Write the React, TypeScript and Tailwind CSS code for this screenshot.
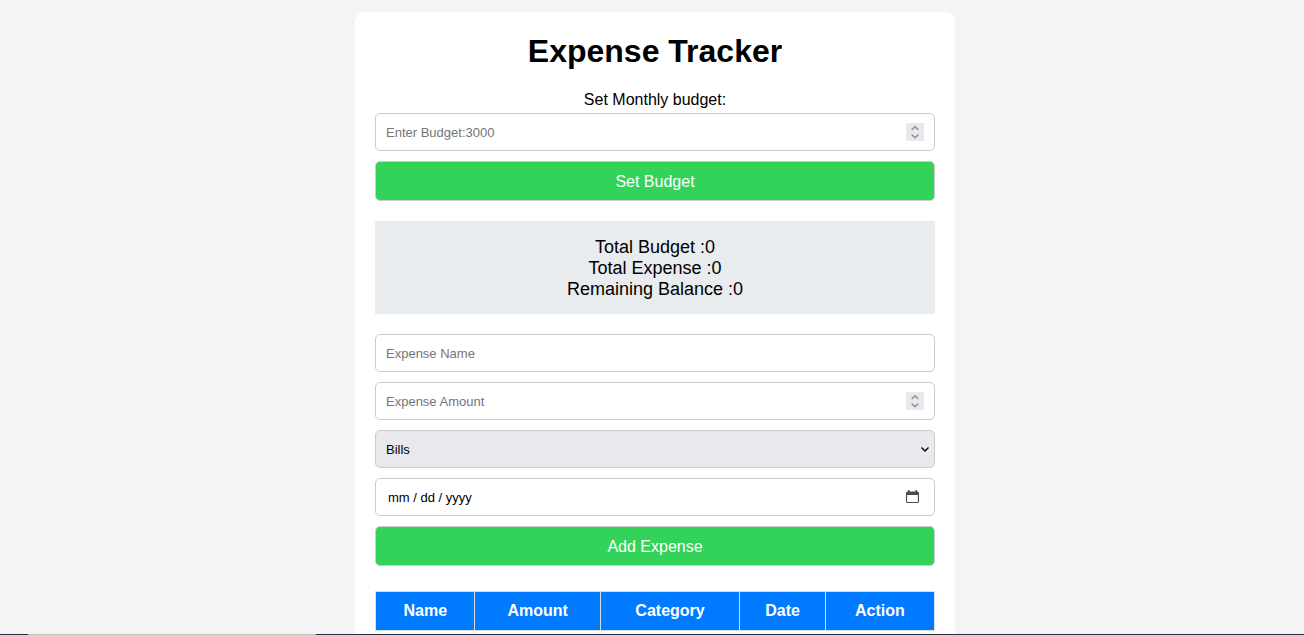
import { useState } from "react";
import type { FormEvent, ReactNode } from "react";

const CATEGORIES = ["Bills", "Food", "Travel", "Shopping", "Other"];
const COLUMNS = ["Name", "Amount", "Category", "Date", "Action"];

type Expense = { id: number; name: string; amount: number; category: string; date: string };

function Field({ children }: { children: ReactNode }) {
  return (
    <div className="flex h-[38px] items-center rounded-[5px] border border-[#cccccc] bg-white pr-2.5 focus-within:border-[#007bff]">
      {children}
    </div>
  );
}

const inputClass =
  "h-full min-w-0 flex-1 appearance-none bg-transparent pl-2.5 text-[13px] outline-none placeholder:text-[#757575] [&::-webkit-inner-spin-button]:appearance-none";

function NumberField(props: {
  id: string;
  label: string;
  placeholder: string;
  value: string;
  onChange: (value: string) => void;
}) {
  const step = (by: number) => props.onChange(String((Number(props.value) || 0) + by));
  return (
    <Field>
      <input
        id={props.id}
        type="number"
        aria-label={props.label}
        placeholder={props.placeholder}
        value={props.value}
        onChange={(e) => props.onChange(e.target.value)}
        className={inputClass}
      />
      <div className="flex h-[18px] w-[18px] flex-col bg-[#e9e9ed]">
        <button type="button" aria-label="Increase" onClick={() => step(1)} className="h-[9px]">
          <svg viewBox="0 0 18 9" className="h-[9px] w-[18px]" fill="none" stroke="#8f8f9d" strokeWidth="1.5">
            <path d="M5.7 6.900 9 3.700l3.300 3.200" />
          </svg>
        </button>
        <button type="button" aria-label="Decrease" onClick={() => step(-1)} className="h-[9px]">
          <svg viewBox="0 0 18 9" className="h-[9px] w-[18px]" fill="none" stroke="#8f8f9d" strokeWidth="1.5">
            <path d="M5.700 2.600 9 5.800l3.300-3.200" />
          </svg>
        </button>
      </div>
    </Field>
  );
}

function SubmitButton({ children }: { children: ReactNode }) {
  return (
    <button
      type="submit"
      className="h-10 cursor-pointer rounded-[5px] border border-[#cccccc] bg-[#33d35a] pt-0.5 text-base text-white hover:bg-[#2bbd4f]"
    >
      {children}
    </button>
  );
}

export default function App() {
  const [budgetInput, setBudgetInput] = useState("");
  const [budget, setBudget] = useState(0);
  const [name, setName] = useState("");
  const [amount, setAmount] = useState("");
  const [category, setCategory] = useState(CATEGORIES[0]);
  const [date, setDate] = useState("");
  const [expenses, setExpenses] = useState<Expense[]>([]);

  const total = expenses.reduce((sum, item) => sum + item.amount, 0);

  const saveBudget = (e: FormEvent) => {
    e.preventDefault();
    setBudget(Number(budgetInput) || 0);
  };

  const addExpense = (e: FormEvent) => {
    e.preventDefault();
    if (!name || !amount) return;
    setExpenses([...expenses, { id: Date.now(), name, amount: Number(amount), category, date }]);
    setName("");
    setAmount("");
    setDate("");
  };

  const today = () =>
    setDate(new Date().toLocaleDateString("en-US", { month: "2-digit", day: "2-digit", year: "numeric" }));

  return (
    <div className="flex min-h-screen flex-col items-center bg-[#f4f4f4] pt-3 pl-1.5 font-['Liberation_Sans',Arial,sans-serif] text-black">
      <main className="w-full max-w-[600px] flex-1 rounded-t-[10px] bg-white px-5 pt-5 text-center">
        <h1 className="text-[32px] leading-[38px] font-bold">Expense Tracker</h1>

        <form onSubmit={saveBudget} className="mt-5 flex flex-col">
          <label htmlFor="budget" className="mb-1 text-base leading-[19px]">
            Set Monthly budget:
          </label>
          <NumberField
            id="budget"
            label="Set Monthly budget:"
            placeholder="Enter Budget:3000"
            value={budgetInput}
            onChange={setBudgetInput}
          />
          <div className="mt-2.5 flex flex-col">
            <SubmitButton>Set Budget</SubmitButton>
          </div>
        </form>

        <section className="mt-5 bg-[#e9ecef] pt-4 pb-3.5 text-lg leading-[21px]">
          <p>Total Budget :{budget}</p>
          <p>Total Expense :{total}</p>
          <p>Remaining Balance :{budget - total}</p>
        </section>

        <form onSubmit={addExpense} className="mt-5 flex flex-col gap-2.5">
          <Field>
            <input
              type="text"
              aria-label="Expense Name"
              placeholder="Expense Name"
              value={name}
              onChange={(e) => setName(e.target.value)}
              className={inputClass}
            />
          </Field>
          <NumberField
            id="amount"
            label="Expense Amount"
            placeholder="Expense Amount"
            value={amount}
            onChange={setAmount}
          />
          <div className="relative">
            <select
              aria-label="Category"
              value={category}
              onChange={(e) => setCategory(e.target.value)}
              className="block h-[38px] w-full appearance-none rounded-[5px] border border-[#cccccc] bg-[#e9e9ed] px-2.5 pt-0.5 text-[13px]"
            >
              {CATEGORIES.map((item) => (
                <option key={item}>{item}</option>
              ))}
            </select>
            <svg
              viewBox="0 0 10 8"
              className="pointer-events-none absolute top-4 right-[5px] h-2 w-2.5"
              fill="none"
              stroke="black"
              strokeWidth="1.4"
            >
              <path d="M1.500 1.500 5 4.900 8.500 1.500" />
            </svg>
          </div>
          <Field>
            <input
              type="text"
              inputMode="numeric"
              aria-label="Date"
              placeholder="mm / dd / yyyy"
              value={date}
              onChange={(e) => setDate(e.target.value)}
              className="h-full min-w-0 flex-1 bg-transparent pl-3 text-[13px] outline-none placeholder:text-black"
            />
            <button type="button" aria-label="Use today's date" onClick={today} className="mr-1 h-4 w-4">
              <svg viewBox="0 0 16 16" className="h-4 w-4" fill="#4a4a4f">
                <path
                  fillRule="evenodd"
                  d="M4 1h1.500v1.500h6V1H13v1.500h.500A1.500 1.500 0 0 1 15 4v8.500a1.500 1.500 0 0 1-1.500 1.500h-10A1.500 1.500 0 0 1 2 12.500V4a1.500 1.500 0 0 1 1.500-1.500H4ZM3.100 6v6.400a.5.5 0 0 0 .5.500h9.800a.5.5 0 0 0 .5-.5V6Z"
                />
              </svg>
            </button>
          </Field>
          <SubmitButton>Add Expense</SubmitButton>
        </form>

        <table className="mt-[25px] w-full border-collapse text-base leading-[18px]">
          <thead>
            <tr className="bg-[#007bff] text-white">
              {COLUMNS.map((column) => (
                <th key={column} className="border border-[#dddddd] p-2.5 font-bold">
                  {column}
                </th>
              ))}
            </tr>
          </thead>
          <tbody>
            {expenses.map((item) => (
              <tr key={item.id}>
                <td className="border border-[#dddddd] p-2.5">{item.name}</td>
                <td className="border border-[#dddddd] p-2.5">{item.amount}</td>
                <td className="border border-[#dddddd] p-2.5">{item.category}</td>
                <td className="border border-[#dddddd] p-2.5">{item.date}</td>
                <td className="border border-[#dddddd] p-2.5">
                  <button
                    type="button"
                    onClick={() => setExpenses(expenses.filter((other) => other.id !== item.id))}
                    className="text-red-600"
                  >
                    Delete
                  </button>
                </td>
              </tr>
            ))}
          </tbody>
        </table>
      </main>
      <div aria-hidden="true" className="fixed inset-x-0 bottom-0 flex h-px bg-[#243441]">
        <div className="ml-7 w-72 bg-[#c1c1c1]" />
      </div>
    </div>
  );
}
